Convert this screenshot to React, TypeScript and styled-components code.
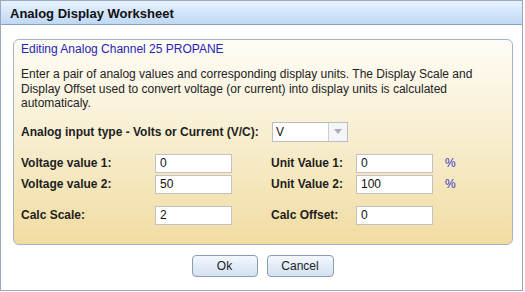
import React from "react";
import styled, { createGlobalStyle } from "styled-components";

const GlobalStyle = createGlobalStyle`
  html, body {
    margin: 0;
    padding: 0;
    background: #ffffff;
  }
  body {
    font-family: "Liberation Sans", Arial, sans-serif;
    font-size: 12px;
    color: #222222;
  }
`;

const Dialog = styled.div`
  box-sizing: border-box;
  width: 523px;
  height: 291px;
  border: 1px solid #98a9bb;
  background: #ffffff;
  display: flex;
  flex-direction: column;
`;

const TitleBar = styled.div`
  box-sizing: border-box;
  height: 24px;
  display: flex;
  align-items: center;
  padding-left: 9px;
  background: linear-gradient(to bottom, #e6f1fd 0%, #d3e5fa 50%, #bfd8f5 100%);
  border-top: 1px solid #e9f2fc;
  border-bottom: 1px solid #8ea4bb;
  font-size: 13px;
  font-weight: bold;
  color: #111111;
`;

const Body = styled.div`
  padding: 14px 9px 0 12px;
`;

const Panel = styled.div`
  box-sizing: border-box;
  height: 206px;
  border: 1px solid #a3b3c4;
  border-radius: 6px;
  padding: 2px 10px 0 7px;
  background: linear-gradient(to bottom, #fefcf6 0%, #f8efd2 45%, #f1dca2 100%);
`;

const Heading = styled.div`
  color: #2525b5;
  line-height: 15px;
`;

const Intro = styled.p`
  margin: 10px 0 0 0;
  line-height: 14.5px;
  color: #222222;
`;

const TypeRow = styled.div`
  display: flex;
  align-items: center;
  margin-top: 11px;
`;

const Label = styled.span<{ $width?: number }>`
  font-weight: bold;
  color: #1e1e1e;
  width: ${({ $width }) => ($width ? `${$width}px` : "auto")};
  flex-shrink: 0;
`;

const Select = styled.div`
  box-sizing: border-box;
  width: 76px;
  height: 20px;
  border: 1px solid #b9bdc4;
  background: #ffffff;
  display: flex;
`;

const SelectValue = styled.span`
  flex: 1;
  padding-left: 3px;
  line-height: 18px;
  color: #111111;
`;

const SelectArrow = styled.span`
  width: 18px;
  border-left: 1px solid #c9ced6;
  background: #f4f5f7;
  display: flex;
  align-items: center;
  justify-content: center;
`;

const ValueGrid = styled.div`
  display: grid;
  grid-template-columns: 134px 77px 39px 85px 77px 12px auto;
  grid-template-rows: 19px 19px 8px 19px;
  row-gap: 2px;
  align-items: center;
  margin-top: 12px;
`;

const Spacer = styled.div`
  grid-column: 1 / -1;
`;

const Field = styled.div`
  box-sizing: border-box;
  height: 19px;
  border: 1px solid #c2c2c2;
  background: #ffffff;
  padding-left: 4px;
  line-height: 17px;
  color: #111111;
`;

const Unit = styled.span`
  color: #3333cc;
`;

const Footer = styled.div`
  display: flex;
  justify-content: center;
  gap: 9px;
  margin-top: 10px;
  padding-right: 1px;
`;

const Button = styled.button<{ $width: number }>`
  box-sizing: border-box;
  width: ${({ $width }) => $width}px;
  height: 22px;
  border: 1px solid #8b9cb1;
  border-radius: 4px;
  background: linear-gradient(to bottom, #f3f8fd 0%, #e2ecf7 50%, #d3e1f0 100%);
  font-family: "Liberation Sans", Arial, sans-serif;
  font-size: 12px;
  color: #222222;
  padding: 0;
`;

const rows = [
  { left: "Voltage value 1:", lv: "0", right: "Unit Value 1:", rv: "0", unit: "%" },
  { left: "Voltage value 2:", lv: "50", right: "Unit Value 2:", rv: "100", unit: "%" },
];

export default function App() {
  return (
    <>
      <GlobalStyle />
      <Dialog>
        <TitleBar>Analog Display Worksheet</TitleBar>
        <Body>
          <Panel>
            <Heading>Editing Analog Channel 25 PROPANE</Heading>
            <Intro>
              Enter a pair of analog values and corresponding display units. The Display Scale and
              Display Offset used to convert voltage (or current) into display units is calculated
              automaticaly.
            </Intro>
            <TypeRow>
              <Label $width={251}>Analog input type - Volts or Current (V/C):</Label>
              <Select>
                <SelectValue>V</SelectValue>
                <SelectArrow>
                  <svg width="8" height="5" viewBox="0 0 8 5">
                    <path d="M0 0 L8 0 L4 5 Z" fill="#a9b0bb" />
                  </svg>
                </SelectArrow>
              </Select>
            </TypeRow>
            <ValueGrid>
              {rows.map((r) => (
                <React.Fragment key={r.left}>
                  <Label>{r.left}</Label>
                  <Field>{r.lv}</Field>
                  <span />
                  <Label>{r.right}</Label>
                  <Field>{r.rv}</Field>
                  <span />
                  <Unit>{r.unit}</Unit>
                </React.Fragment>
              ))}
              <Spacer />
              <Label>Calc Scale:</Label>
              <Field>2</Field>
              <span />
              <Label>Calc Offset:</Label>
              <Field>0</Field>
              <span />
              <span />
            </ValueGrid>
          </Panel>
          <Footer>
            <Button $width={66}>Ok</Button>
            <Button $width={67}>Cancel</Button>
          </Footer>
        </Body>
      </Dialog>
    </>
  );
}
